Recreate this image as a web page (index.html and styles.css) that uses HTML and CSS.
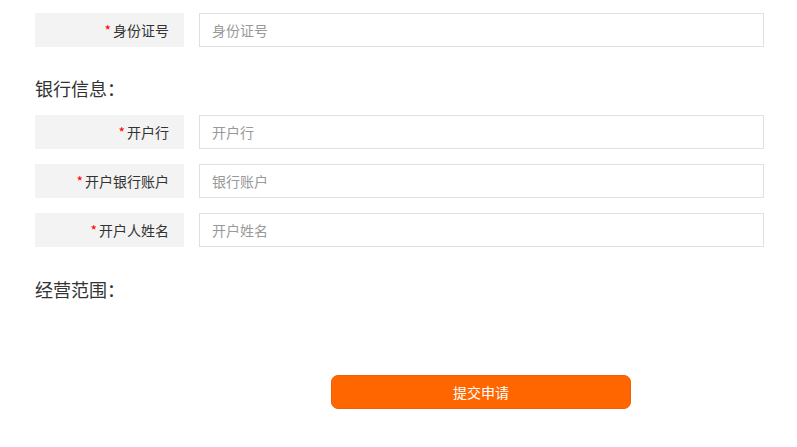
FILE: index.html
```html
<!DOCTYPE html>
<html lang="zh">
<head>
<meta charset="utf-8">
<link rel="stylesheet" href="styles.css">
</head>
<body>
<div class="form">
  <div class="row first">
    <label class="label"><span class="req">*</span>身份证号</label>
    <input class="input" placeholder="身份证号">
  </div>
  <h3 class="section">银行信息：</h3>
  <div class="row">
    <label class="label"><span class="req">*</span>开户行</label>
    <input class="input" placeholder="开户行">
  </div>
  <div class="row">
    <label class="label"><span class="req">*</span>开户银行账户</label>
    <input class="input" placeholder="银行账户">
  </div>
  <div class="row">
    <label class="label"><span class="req">*</span>开户人姓名</label>
    <input class="input" placeholder="开户姓名">
  </div>
  <h3 class="section">经营范围：</h3>
  <div class="scope"></div>
  <div class="actions">
    <button class="submit">提交申请</button>
  </div>
</div>
</body>
</html>
```
FILE: styles.css
```css
* { box-sizing: border-box; }
body {
  margin: 0;
  background: #fff;
  font-family: "Noto Sans CJK SC", "Noto Sans", sans-serif;
  color: #333;
}
.form {
  width: 764px;
  padding: 13px 0 0 35px;
}
.row {
  display: flex;
  gap: 15px;
  height: 34px;
  margin-bottom: 15px;
}
.label {
  width: 149px;
  background: #f3f3f3;
  font-size: 14px;
  line-height: 34px;
  text-align: right;
  padding-right: 15px;
  color: #333;
}
.req {
  color: #f00;
  margin-right: 2px;
}
.input {
  flex: 1;
  height: 34px;
  border: 1px solid #e0e0e0;
  padding: 0 12px;
  font-family: inherit;
  font-size: 14px;
  color: #333;
  outline: none;
}
.input::placeholder { color: #999; }
.section {
  margin: 0;
  font-size: 18px;
  font-weight: normal;
  line-height: 40px;
  height: 40px;
  color: #333;
}
.row.first { margin-bottom: 21px; }
.row.first + .section { margin: 0 0 7px; }
.row + .section { margin-top: 22px; }
.scope { height: 66px; }
.actions {
  padding-left: 163px;
  display: flex;
  justify-content: center;
}
.submit {
  width: 300px;
  height: 34px;
  background: #ff6600;
  border: 1px solid #f06000;
  border-radius: 7px;
  color: #fff;
  font-family: inherit;
  font-size: 14px;
}
```
